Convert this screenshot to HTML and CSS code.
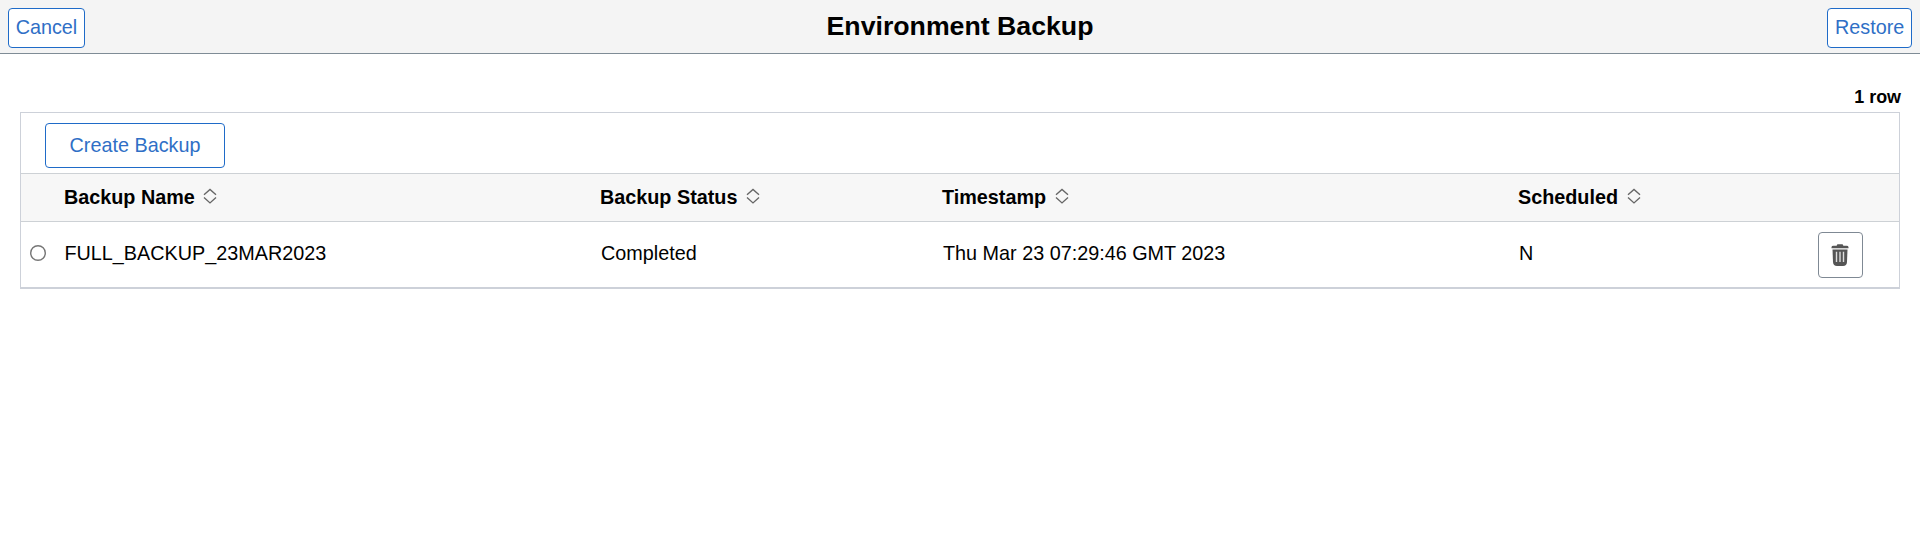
FILE: index.html
```html
<!DOCTYPE html>
<html lang="en">
<head>
<meta charset="utf-8">
<title>Environment Backup</title>
<link rel="stylesheet" href="styles.css">
</head>
<body>
<svg class="defs" width="0" height="0">
  <symbol id="sort" viewBox="0 0 14 16">
    <path d="M1 6.8 7 1.5 13 6.8M1 9.6 7 14.9 13 9.6" fill="none" stroke="#666" stroke-width="1.35"/>
  </symbol>
</svg>
<header class="topbar">
  <button class="btn btn-bar">Cancel</button>
  <h1 class="title">Environment Backup</h1>
  <button class="btn btn-bar btn-end">Restore</button>
</header>
<main class="content">
  <div class="count">1 row</div>
  <section class="grid">
    <div class="toolbar"><button class="btn btn-create">Create Backup</button></div>
    <div class="line head">
      <span></span>
      <span class="cell">Backup Name<svg class="sort"><use href="#sort"/></svg></span>
      <span class="cell">Backup Status<svg class="sort"><use href="#sort"/></svg></span>
      <span class="cell">Timestamp<svg class="sort"><use href="#sort"/></svg></span>
      <span class="cell">Scheduled<svg class="sort"><use href="#sort"/></svg></span>
      <span></span>
    </div>
    <div class="line row">
      <span class="pick"><svg width="16" height="16"><circle cx="8" cy="8" r="7.3" fill="#fff" stroke="#767676" stroke-width="1.4"/></svg></span>
      <span class="cell">FULL_BACKUP_23MAR2023</span>
      <span class="cell">Completed</span>
      <span class="cell">Thu Mar 23 07:29:46 GMT 2023</span>
      <span class="cell">N</span>
      <button class="delete" aria-label="Delete">
        <svg width="18" height="24" viewBox="0 0 18 24">
          <path d="M.5 5.2V4.2Q.5 2.8 2.5 2.8H5.6L6.4 1.2H11.6L12.4 2.8H15.5Q17.5 2.8 17.5 4.2V5.2Z" fill="#555"/>
          <path d="M1.5 6.4H16.5L16 19Q15.8 23 12 23H6Q2.2 23 2 19Z" fill="#555"/>
          <path d="M5.5 8.7V19M9 8.7V19M12.5 8.7V19" stroke="#ddd" stroke-width="1.4"/>
        </svg>
      </button>
    </div>
  </section>
</main>
</body>
</html>
```
FILE: styles.css
```css
* { box-sizing: border-box; }
body {
  margin: 0;
  background: #fff;
  color: #000;
  font: 19.8px/22px "Liberation Sans", Arial, sans-serif;
}
.defs { display: block; }
.topbar {
  display: grid;
  grid-template-columns: 1fr auto 1fr;
  align-items: start;
  height: 54px;
  padding: 8px 8px 0;
  background: #f4f4f4;
  border-bottom: 1px solid #7f8c96;
}
.title {
  margin: 3px 0 0;
  font-size: 26.7px;
  line-height: 31px;
}
.btn {
  background: #fff;
  border: 1px solid #1f6bc8;
  border-radius: 4px;
  color: #2f6fc6;
  font: inherit;
}
.btn-bar {
  justify-self: start;
  height: 40px;
  padding: 0 6.7px 3px;
}
.btn-end { justify-self: end; }
.content { padding: 32px 20px 0; }
.count {
  height: 26px;
  margin-right: -1px;
  font-size: 17.9px;
  font-weight: bold;
  text-align: right;
}
.grid {
  border: 1px solid #cdd1d9;
  border-bottom-width: 2px;
}
.toolbar {
  height: 60px;
  padding: 10px 24px 0;
}
.btn-create {
  display: block;
  width: 180px;
  height: 45px;
  padding: 0 0 1px;
}
.line {
  display: grid;
  grid-template-columns: 43px 536px 342px 576px 300px 45px;
}
.head {
  height: 49px;
  padding-top: 12px;
  background: #f7f7f7;
  border: solid #cdd1d5;
  border-width: 1px 0;
  font-weight: bold;
}
.sort {
  width: 14px;
  height: 16px;
  margin-left: 8.5px;
  vertical-align: 0;
}
.row {
  height: 65px;
  padding-top: 10px;
}
.row .cell { padding: 10px 0 0 1px; }
.row .cell:nth-child(2) { padding-left: 0.5px; }
.pick { padding: 13px 0 0 9px; }
.pick svg { display: block; }
.delete {
  display: grid;
  place-items: center;
  width: 45px;
  height: 46px;
  padding: 0 2px 0 0;
  background: #fff;
  border: 1px solid #7f8994;
  border-radius: 4px;
}
```
